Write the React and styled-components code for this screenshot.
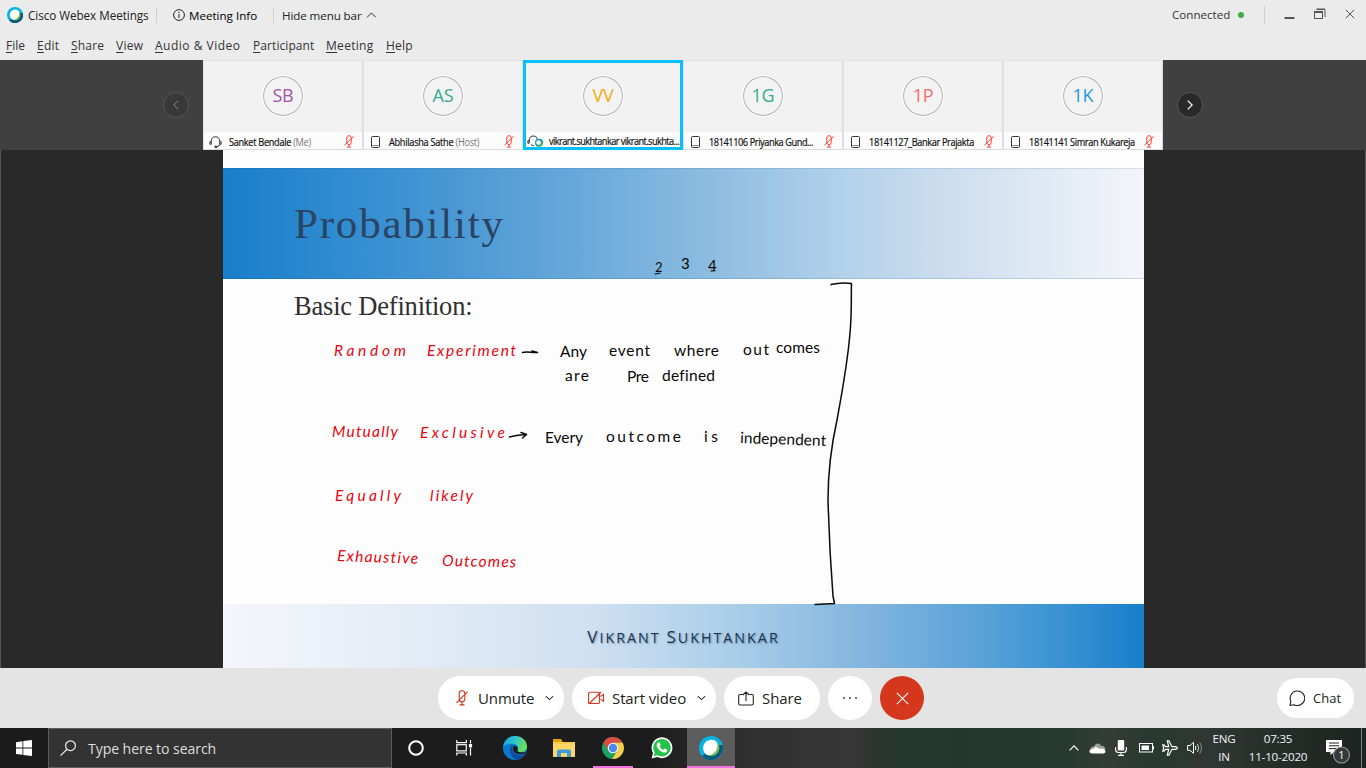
import React from "react";
import styled, { createGlobalStyle } from "styled-components";

const Global = createGlobalStyle`
  * { box-sizing: border-box; }
  html, body { margin: 0; padding: 0; }
  body { font-family: "Open Sans", "Noto Sans", sans-serif; overflow: hidden; background: #292929; }
  svg { display: block; flex: none; }
`;

const Screen = styled.div`
  width: 1366px;
  height: 768px;
  display: flex;
  flex-direction: column;
`;

const Text = styled.span`
  font-size: ${(p) => p.$size || 12}px;
  letter-spacing: ${(p) => p.$ls || 0}px;
  width: ${(p) => (p.$w ? p.$w + "px" : "auto")};
  margin-left: ${(p) => p.$ml || 0}px;
  margin-right: ${(p) => p.$mr || 0}px;
  padding-bottom: ${(p) => p.$lift || 0}px;
  color: ${(p) => p.$color || "#222"};
  white-space: nowrap;
  flex: none;
`;

/* ---------- title and menu bars ---------- */
const TitleBar = styled.header`
  height: 30px;
  background: #ebebeb;
  display: flex;
  align-items: center;
  padding: 0 11px 0 7px;
`;
const Divider = styled.i`
  width: 1px;
  height: ${(p) => p.$h || 16}px;
  background: #cfcfcf;
  margin: 0 ${(p) => p.$r}px 0 ${(p) => p.$l}px;
  flex: none;
`;
const Spacer = styled.div`
  flex: 1;
`;
const Dot = styled.i`
  width: 6px;
  height: 6px;
  border-radius: 50%;
  background: #3fab45;
  margin-left: 8px;
`;
const WindowButtons = styled.div`
  display: flex;
  align-items: center;
  gap: 19px;
  height: 26px;
  padding-bottom: 2px;
`;
const MenuBar = styled.nav`
  height: 30px;
  background: #ebebeb;
  display: flex;
  align-items: center;
  gap: 12px;
  padding-left: 6px;
`;
const Mnemonic = styled.u`
  text-decoration-thickness: 1px;
  text-underline-offset: 2px;
`;

/* ---------- participant strip ---------- */
const Strip = styled.section`
  height: 90px;
  background: #404040;
  display: flex;
  justify-content: center;
`;
const StripSide = styled.div`
  width: 203px;
  display: flex;
  align-items: center;
  justify-content: ${(p) => (p.$left ? "flex-end" : "flex-start")};
  padding: 0 14px;
`;
const RoundArrow = styled.button`
  width: 26px;
  height: 26px;
  padding: 0;
  border-radius: 50%;
  border: 1px solid #565656;
  background: ${(p) => (p.$dim ? "#383838" : "#292929")};
  color: ${(p) => (p.$dim ? "#858585" : "#fff")};
  display: flex;
  align-items: center;
  justify-content: center;
`;
const Tiles = styled.div`
  width: 960px;
  display: flex;
`;
const Tile = styled.div`
  width: 160px;
  height: 90px;
  display: flex;
  flex-direction: column;
  background: #f1f1f1;
  box-shadow: ${(p) =>
    p.$active
      ? "inset 0 0 0 3px #08c0fb"
      : "inset 1px 1px 0 #e3e3e3, inset -1px -1px 0 #dcdcdc"};
`;
const AvatarArea = styled.div`
  height: 72px;
  display: flex;
  justify-content: center;
  padding-top: 15px;
`;
const Avatar = styled.div`
  width: 42px;
  height: 42px;
  border-radius: 50%;
  background: #f3f3f3;
  border: 1.5px solid #fff;
  box-shadow: inset 0 0 0 1px #ababab;
  color: ${(p) => p.$color};
  font-size: 18px;
  letter-spacing: -0.2px;
  display: flex;
  align-items: center;
  justify-content: center;
  padding-bottom: 2px;
`;
const NameBar = styled.div`
  height: ${(p) => (p.$active ? 15 : 17)}px;
  margin: 0 ${(p) => (p.$active ? 3 : 1)}px;
  background: #fcfcfc;
  display: flex;
  align-items: center;
  padding: ${(p) => (p.$active ? "3px 0 0 1px" : "2px 8px 0 5px")};
`;
const IconSlot = styled.div`
  width: ${(p) => p.$w}px;
  padding-left: ${(p) => p.$pl || 0}px;
  margin-left: ${(p) => p.$ml || 0}px;
  flex: none;
`;
const Name = styled.div`
  flex: 1;
  min-width: 0;
  font-size: 10.2px;
  letter-spacing: ${(p) => p.$ls}px;
  color: #111;
  -webkit-text-stroke: 0.2px #111;
  white-space: nowrap;
  transform: scaleX(0.9);
  transform-origin: left center;
`;
const Role = styled.span`
  color: #777;
  -webkit-text-stroke: 0;
`;

/* ---------- shared slide ---------- */
const Stage = styled.main`
  height: 518px;
  background: #292929;
  border-left: 1px solid #555;
  border-right: 1px solid #555;
  padding: 0 221px 0 222px;
`;
const Slide = styled.div`
  width: 921px;
  height: 518px;
  background: #fdfdfd;
  position: relative;
  display: flex;
  flex-direction: column;
`;
const SlideHeader = styled.div`
  margin-top: 18px;
  height: 111px;
  background: linear-gradient(90deg, #187fcb 0%, #2f8bd0 12%, #4998d4 25%, #67a8da 38%, #8abbe0 52%, #b2d1ea 67%, #cfdfef 80%, #e5edf5 92%, #f4f5fa 100%);
  box-shadow: inset 0 1px 0 rgba(0, 70, 120, 0.12), inset 0 -1px 0 rgba(0, 70, 120, 0.16);
  padding: 29px 0 0 71px;
`;
const SlideTitle = styled.h1`
  margin: 0;
  font: 400 43px/54px "Liberation Serif", serif;
  letter-spacing: 1.8px;
  color: #2a4464;
`;
const SlideBody = styled.div`
  flex: 1;
  padding: 11px 0 0 71px;
`;
const SlideSubtitle = styled.h2`
  margin: 0;
  font: 400 26.5px/32px "Liberation Serif", serif;
  letter-spacing: -0.2px;
  color: #303030;
`;
const SlideFooter = styled.footer`
  height: 64px;
  background: linear-gradient(90deg, #f5f6fb 0%, #e4ecf6 20%, #cfe0f1 40%, #abcfe9 55%, #84b6df 69%, #5aa3d8 82%, #3a92d2 91%, #177fcb 100%);
  display: flex;
  align-items: center;
  justify-content: center;
  padding-top: 2px;
`;
const Author = styled.div`
  font-size: 17px;
  line-height: 24px;
  letter-spacing: 2px;
  color: #1d3550;
  text-shadow: 1px 1px 2px rgba(30, 60, 100, 0.45);
`;
const AuthorSmall = styled.span`
  font-size: 14.3px;
`;
const Ink = styled.svg`
  position: absolute;
  left: 0;
  top: 0;
`;
const InkWord = styled.text`
  font-family: Lato, "Open Sans", sans-serif;
  font-size: ${(p) => p.$size || 15.5}px;
  font-style: ${(p) => (p.$red ? "italic" : "normal")};
  font-variant-ligatures: none;
  fill: ${(p) => (p.$red ? "#e60610" : "#080808")};
`;

/* ---------- call controls ---------- */
const Controls = styled.section`
  height: 60px;
  background: #e4e4e4;
  display: flex;
  align-items: center;
  padding: 0 12px 0 438px;
  gap: 8px;
`;
const Pill = styled.button`
  width: ${(p) => p.$w}px;
  height: ${(p) => p.$h || 44}px;
  border: 0;
  border-radius: 22px;
  background: ${(p) => (p.$danger ? "#d5371c" : "#fff")};
  padding: 0 0 0 ${(p) => p.$pl || 0}px;
  display: flex;
  align-items: center;
  justify-content: ${(p) => (p.$pl ? "flex-start" : "center")};
  font-family: inherit;
  flex: none;
`;

/* ---------- taskbar ---------- */
const Taskbar = styled.footer`
  height: 40px;
  display: flex;
  background: linear-gradient(90deg, #1b1b1b 0, #1c1c1c 650px, #303030 750px, #363636 850px, #2a352f 885px, #243a2e 900px, #23372c 960px, #263a2f 1060px, #343c37 1110px, #28392f 1150px, #303633 1210px, #252d29 1280px, #1d2320 1366px);
`;
const TaskCell = styled.div`
  width: ${(p) => p.$w || 48}px;
  height: 40px;
  display: flex;
  align-items: center;
  justify-content: center;
  background: ${(p) => (p.$active ? "#5d5d5d" : "transparent")};
  border-bottom: ${(p) => (p.$active ? "2px solid #f173e2" : "0")};
  padding-top: ${(p) => (p.$active ? 2 : 0)}px;
  flex: none;
`;
const RunningCell = styled(TaskCell)`
  width: 40px;
  margin: 0 4px;
  border-bottom: 2px solid #f173e2;
  padding-top: 2px;
`;
const Search = styled.div`
  width: 344px;
  height: 40px;
  background: #333;
  border: 1px solid #5e5e5e;
  display: flex;
  align-items: center;
  padding-left: 11px;
  gap: 12px;
`;
const Tray = styled.div`
  display: flex;
  align-items: center;
  gap: 9px;
`;
const TrayText = styled.div`
  width: ${(p) => p.$w}px;
  margin-left: ${(p) => p.$ml || 0}px;
  font-size: 11.6px;
  line-height: 18px;
  letter-spacing: ${(p) => p.$ls || 0}px;
  color: #f3f3f3;
  text-align: center;
  white-space: nowrap;
  padding-bottom: 1px;
`;
const Notifications = styled.svg`
  margin: 7px 0 0 8px;
`;
const DesktopEdge = styled.i`
  width: 1px;
  height: 40px;
  background: #7b7f7d;
  margin-left: 9px;
`;

const Stroke = ({ w, h, box, color = "#333", sw = 1, children }) => (
  <svg width={w} height={h} viewBox={box || `0 0 ${w} ${h}`} fill="none" stroke={color} strokeWidth={sw}>
    {children}
  </svg>
);

const WebexLogo = ({ size }) => (
  <svg width={size} height={size} viewBox="0 0 24 24">
    <circle cx="12" cy="12" r="12" fill="#04b4e5" />
    <path d="M23.6 9A12 12 0 0 1 3.2 20.2L7 16.8A7.5 7.5 0 0 0 19 9Z" fill="#075a7c" />
    <circle cx="12.4" cy="12" r="8" fill="#6cbf4b" />
    <path d="M4.2 12.5C4 7.2 8 3.6 12.8 3.8C17 3.9 18.8 6.8 18.4 10.5C17.8 15.7 13.4 19.6 9.4 19.2C6.2 18.8 4.4 15.8 4.2 12.5Z" fill="#fff" />
  </svg>
);

const MicOff = ({ w = 12, h = 16, color = "#d5371c", sw = 1.1 }) => (
  <Stroke w={w} h={h} box="0 0 12 16" color={color} sw={sw}>
    <rect x="3.2" y="0.8" width="5.6" height="11" rx="2.8" />
    <path d="M0.5 12.8L11.6 1.6M6 12v2.5M3.5 14.9h5" />
  </Stroke>
);
const Headset = () => (
  <Stroke w={13} h={12} color="#444" sw={1.1}>
    <path d="M2.3 8V5a4.2 4.2 0 0 1 8.4 0v3M2.2 5.2c-2 .6-2 3 0 3.400M10.8 5.2c2 .6 2 3 0 3.400M10.500 8.500c-.2 1.600-1.400 2.200-3 2.200" />
    <circle cx="6.8" cy="10.8" r=".8" fill="#444" />
  </Stroke>
);
const Phone = () => (
  <Stroke w={9} h={12} color="#333" sw={1}>
    <rect x=".5" y=".5" width="8" height="11" rx="1" />
    <path d="M1 9.500h7" stroke="#888" />
  </Stroke>
);
const HeadsetHost = () => (
  <svg width="17" height="12" viewBox="0 0 17 12">
    <path d="M2.3 8V5a4 4 0 0 1 8 0v1M2.2 5.2c-2 .6-2 3 0 3.4M4 9.5c.6 1 1.6 1.2 3 1.2" fill="none" stroke="#444" strokeWidth="1.1" />
    <circle cx="12" cy="7.8" r="4" fill="#0799b8" />
    <circle cx="13" cy="9" r="2.4" fill="#5ab04f" />
    <circle cx="11.5" cy="7.5" r="2.3" fill="#fff" />
  </svg>
);
const Chevron = ({ up, w = 10, color = "#333", sw = 1.2 }) => (
  <Stroke w={w} h={6} box="0 0 10 6" color={color} sw={sw}>
    <path d={up ? "M.6 5.3L5 .9l4.4 4.4" : "M1 1l4 3.8L9 1"} />
  </Stroke>
);

const EdgeLogo = () => (
  <svg width="24" height="24" viewBox="0 0 24 24">
    <defs>
      <linearGradient id="edgeTop" x1="0" x2="1" y1="0" y2=".3">
        <stop offset="0" stopColor="#1b9de2" />
        <stop offset=".5" stopColor="#2bc3d2" />
        <stop offset="1" stopColor="#6adf58" />
      </linearGradient>
    </defs>
    <circle cx="12" cy="12" r="12" fill="#0b79d0" />
    <path d="M.1 11C1 4.200 6 0 12 0c7 0 12 5 12 10.500 0 4-3 5.700-6 5.700-2.500 0-4.200-.8-3.500-1.900 1.600-2.700.2-6.300-4-6.600C5.700 7.400 1.500 8.500.1 11Z" fill="url(#edgeTop)" />
    <path d="M8.500 9.500C5.500 13 6.200 20 13.500 23.800c4-.4 7.500-3.300 9-6.600-3.500 2.200-10.500 2.400-12.700-1.700-1-2-.7-4.300.9-5.600-.7-.5-1.500-.6-2.200-.4Z" fill="#114d99" />
    <path d="M11 10.300c-1.700 1.700-1.500 5.700 2.200 7.200 2.700 1 6.500.7 9-.3.500-.7.300-1.500-.5-1.200-2.500.8-8 .6-7.200-1.700 1-2-.8-5-3.500-4Z" fill="#1c1c1c" />
  </svg>
);
const FolderIcon = () => (
  <svg width="22" height="19" viewBox="0 0 22 19">
    <path d="M0 1h8l1.500 2H22v15H0Z" fill="#f9cb4e" />
    <path d="M0 0h8.500v3H0Z" fill="#e2a200" />
    <path d="M0 5h22v12H0Z" fill="#fed766" />
    <path d="M4 18v-6.500L6 10.500h10l2 1V18h-4v-4H8v4Z" fill="#3f9ade" />
  </svg>
);
const ChromeLogo = () => (
  <svg width="22" height="22" viewBox="0 0 22 22">
    <circle cx="11" cy="11" r="11" fill="#1fa260" />
    <path d="M11 11L1.500 5.400A11 11 0 0 1 20.600 5.800H11Z" fill="#db4b3f" />
    <path d="M20.500 5.800A11 11 0 0 1 10.300 22l5.200-8.500L11 5.800Z" fill="#ffcd45" />
    <path d="M1.500 5.400L6.600 13.700l4.400-2.700V5.800Z" fill="#db4b3f" />
    <circle cx="11" cy="11" r="5.300" fill="#f4f4f4" />
    <circle cx="11" cy="11" r="4.200" fill="#4a88ee" />
  </svg>
);
const WhatsAppLogo = () => (
  <svg width="22" height="22" viewBox="0 0 22 22">
    <path d="M0.600 21.500L2 16A10.400 10.400 0 1 1 6.200 20Z" fill="#fff" />
    <path d="M2.800 19.200l1-3.600A8.700 8.700 0 1 1 6.600 18.200Z" fill="#25c24a" />
    <path d="M7.200 5.500c.7-.3 1.300-.2 1.600.5l.7 1.700c.2.600-.8 1.300-.8 1.700.7 1.500 2 2.600 3.600 3.300.6.1 1.200-1.300 1.700-1.200l2 1c.6.400 0 1.900-.6 2.400-1.700 1.300-4.200.4-6-.9-1.500-1.100-2.900-2.700-3.500-4.400-.4-1.500 0-3.300 1.300-4.100Z" fill="#fff" />
  </svg>
);

const people = [
  { initials: "SB", color: "#a054a8", name: "Sanket Bendale", role: "(Me)", device: "headset", ls: -0.33 },
  { initials: "AS", color: "#33ac8e", name: "Abhilasha Sathe", role: "(Host)", device: "phone", ls: -0.3 },
  { initials: "VV", color: "#f8a912", name: "vikrant.sukhtankar vikrant.sukhta...", device: "host", active: true, ls: -0.62 },
  { initials: "1G", color: "#33ac8e", name: "18141106 Priyanka Gund...", device: "phone", ls: -0.45 },
  { initials: "1P", color: "#fb6a63", name: "18141127_Bankar Prajakta", device: "phone", ls: -0.4 },
  { initials: "1K", color: "#1c9dd8", name: "18141141 Simran Kukareja", device: "phone", ls: -0.4 },
];

const menus = [
  ["F", "ile", 19], ["E", "dit", 22, 0.2], ["S", "hare", 33, 0.2], ["V", "iew", 27, 0.25],
  ["A", "udio & Video", 86, 0.5], ["P", "articipant", 61, 0.08], ["M", "eeting", 48, 0.3], ["H", "elp", 27, 0.2],
];

/* word, x, baseline, width, red, rotation */
const notes = [
  ["Random", 334, 356, 72, true], ["Experiment", 427, 356, 89, true],
  ["Any", 560, 357, 27], ["event", 609, 356, 41], ["where", 674, 356, 45],
  ["out", 743, 355, 26], ["comes", 776, 353, 44],
  ["are", 565, 381, 24], ["Pre", 627, 382, 22], ["defined", 662, 381, 53],
  ["Mutually", 332, 437, 66, true], ["Exclusive", 420, 438, 85, true],
  ["Every", 545, 443, 38], ["outcome", 606, 442, 75], ["is", 704, 442, 14], ["independent", 740, 443, 86, false, 2],
  ["Equally", 335, 501, 66, true], ["likely", 430, 501, 43, true],
  ["Exhaustive", 337, 561, 81, true, 2], ["Outcomes", 442, 566, 74, true, 1],
];

const devices = { headset: Headset, phone: Phone, host: HeadsetHost };

function Participant({ initials, color, name, role, device, active, ls }) {
  const Device = devices[device];
  return (
    <Tile $active={active}>
      <AvatarArea><Avatar $color={color}>{initials}</Avatar></AvatarArea>
      <NameBar $active={active}>
        <IconSlot $w={active ? 22 : 20} $pl={device === "phone" ? 2 : 0}><Device /></IconSlot>
        <Name $ls={ls}>{name} {role && <Role>{role}</Role>}</Name>
        {!active && <MicOff w={10} h={13} color="#f5372b" sw={1.15} />}
      </NameBar>
    </Tile>
  );
}

export default function App() {
  return (
    <Screen>
      <Global />
      <TitleBar>
        <WebexLogo size={16} />
        <Text $w={120} $size={11.7} $ls={-0.05} $ml={5}>Cisco Webex Meetings</Text>
        <Divider $l={8} $r={16} />
        <Stroke w={12} h={12} color="#222">
          <circle cx="6" cy="6" r="5.400" /><path d="M6 5v4M6 2.800v1.200" />
        </Stroke>
        <Text $w={68} $size={11.6} $color="#000" $ml={4}>Meeting Info</Text>
        <Divider $l={16} $r={8} />
        <Text $w={79} $size={11.6} $ls={-0.1}>Hide menu bar</Text>
        <IconSlot $w={15} $pl={5}><Chevron up w={11} sw={1} /></IconSlot>
        <Spacer />
        <Text $w={58} $size={11.6} $lift={2} $color="#333">Connected</Text>
        <Dot />
        <Divider $l={20} $r={19} $h={18} />
        <WindowButtons>
          <Stroke w={11} h={12} color="#555" sw={2}><path d="M.5 10h10" /></Stroke>
          <Stroke w={12} h={12} color="#555"><rect x=".5" y="3.500" width="8" height="7" /><path d="M.5 4.500h8M2.500 1.500h8.500v7.500M2.500 1h8.500" /></Stroke>
          <Stroke w={10} h={10} color="#555"><path d="M.8.8l8.400 8.400M9.200.8L.8 9.200" /></Stroke>
        </WindowButtons>
      </TitleBar>
      <MenuBar>
        {menus.map(([key, rest, w, ls]) => (
          <Text key={rest} $w={w} $size={12} $ls={ls} $color="#333"><Mnemonic>{key}</Mnemonic>{rest}</Text>
        ))}
      </MenuBar>

      <Strip>
        <StripSide $left>
          <RoundArrow $dim><Stroke w={6} h={10} color="currentColor"><path d="M5.300.6L.8 5l4.500 4.400" /></Stroke></RoundArrow>
        </StripSide>
        <Tiles>{people.map((p) => <Participant key={p.initials} {...p} />)}</Tiles>
        <StripSide>
          <RoundArrow><Stroke w={6} h={10} color="currentColor" sw={1.2}><path d="M.7.6L5.200 5 .7 9.400" /></Stroke></RoundArrow>
        </StripSide>
      </Strip>

      <Stage>
        <Slide>
          <SlideHeader><SlideTitle>Probability</SlideTitle></SlideHeader>
          <SlideBody><SlideSubtitle>Basic Definition:</SlideSubtitle></SlideBody>
          <SlideFooter>
            <Author>V<AuthorSmall>IKRANT </AuthorSmall>S<AuthorSmall>UKHTANKAR</AuthorSmall></Author>
          </SlideFooter>
          <Ink width="921" height="518" viewBox="223 150 921 518">
            {notes.map(([word, x, y, w, red, turn]) => (
              <InkWord key={word} $red={red} x={x} y={y} textLength={w} transform={turn ? `rotate(${turn} ${x} ${y})` : undefined}>
                {word}
              </InkWord>
            ))}
            <InkWord $size={13} x="655" y="272">2</InkWord>
            <InkWord $size={15} x="681" y="269">3</InkWord>
            <InkWord $size={15} x="708" y="271">4</InkWord>
            <g fill="none" stroke="#0a0a0a" strokeWidth="1.500" strokeLinecap="round" strokeLinejoin="round">
              <path d="M655 274l5-.8M711 271l4-.4" strokeWidth="1.100" />
              <path d="M522.500 352.500C527 351 532 353 537.500 352.500M532 351l5.500 1.500" />
              <path d="M509.500 437C515 435.500 520 435 526 434.500M521 432.500l5.500 2-4 3.500" />
              <path d="M831 284.500C837 283 845 282.500 851.500 283.500C851 296 852 312 850 333C848 358 842 393 837 420C831 447 828 473 828 500C829 535 831 570 833 596L834.500 603.500L815 604.500" />
            </g>
          </Ink>
        </Slide>
      </Stage>

      <Controls>
        <Pill $w={126} $pl={18}>
          <MicOff />
          <Text $w={56} $size={15} $ls={-0.1} $ml={10} $mr={11}>Unmute</Text>
          <Chevron w={9} />
        </Pill>
        <Pill $w={144} $pl={16}>
          <Stroke w={17} h={14} color="#d5371c" sw={1.1}>
            <rect x=".6" y="1.200" width="10.800" height="11.300" rx="1" /><path d="M.8 13L13 1M12.500 5.500l3-2.200v7l-3-2.200" />
          </Stroke>
          <Text $w={74} $size={15} $ls={-0.1} $ml={7} $mr={11}>Start video</Text>
          <Chevron w={9} />
        </Pill>
        <Pill $w={96} $pl={14}>
          <Stroke w={16} h={15} color="#222" sw={1.1}>
            <path d="M4.500 3.500H2Q.7 3.500.7 5v7.500q0 1.500 1.300 1.500h12q1.300 0 1.300-1.500V5q0-1.500-1.300-1.500h-2.500M8 10V1M4.800 4L8 .9 11.200 4" />
          </Stroke>
          <Text $w={40} $size={15} $ls={-0.1} $ml={8}>Share</Text>
        </Pill>
        <Pill $w={44}>
          <svg width="16" height="2" viewBox="0 0 16 2" fill="#444"><circle cx="2" cy="1" r="1" /><circle cx="8" cy="1" r="1" /><circle cx="14" cy="1" r="1" /></svg>
        </Pill>
        <Pill $w={44} $danger>
          <Stroke w={13} h={13} color="#fff" sw={1.1}><path d="M.8.8l11.400 11.400M12.200.8L.8 12.200" /></Stroke>
        </Pill>
        <Spacer />
        <Pill $w={77} $h={40} $pl={12}>
          <Stroke w={16} h={16} color="#222" sw={1.1}><path d="M1 15.300l.8-4A7.300 7.300 0 1 1 5 14.700Z" /></Stroke>
          <Text $size={13} $ml={8}>Chat</Text>
        </Pill>
      </Controls>

      <Taskbar>
        <TaskCell>
          <svg width="16" height="16" viewBox="0 0 16 16" fill="#fff"><path d="M0 2.200L6.500 1.200V7.500H0ZM7.300 1.100L16 0V7.500H7.300ZM0 8.400H6.500V14.800L0 13.900ZM7.300 8.400H16V16L7.300 14.900Z" /></svg>
        </TaskCell>
        <Search>
          <Stroke w={16} h={16} color="#eee" sw={1.2}><circle cx="10.500" cy="5.700" r="4.900" /><path d="M7 9.200L.5 15.600" /></Stroke>
          <Text $size={14.1} $ls={-0.08} $color="#dedede">Type here to search</Text>
        </Search>
        <TaskCell><Stroke w={18} h={18} color="#fff" sw={2}><circle cx="9" cy="9" r="6.800" /></Stroke></TaskCell>
        <TaskCell>
          <Stroke w={17} h={16} color="#fff" sw={1.2}>
            <path d="M.8 0v2.600h9.500V0M.8 15.600v-2.600h9.500v2.600M14.500 0v3.500M14.500 8v7.600" />
            <rect x=".8" y="4.700" width="9.500" height="6.200" /><rect x="13.500" y="4.600" width="2" height="2.300" fill="#fff" />
          </Stroke>
        </TaskCell>
        <TaskCell $w={54}><EdgeLogo /></TaskCell>
        <TaskCell $w={43}><FolderIcon /></TaskCell>
        <TaskCell $w={4} />
        <RunningCell><ChromeLogo /></RunningCell>
        <TaskCell $w={50}><WhatsAppLogo /></TaskCell>
        <TaskCell $active><WebexLogo size={24} /></TaskCell>
        <Spacer />
        <Tray>
          <Chevron up w={12} color="#fff" />
          <svg width="17" height="12" viewBox="0 0 17 12"><path d="M2 9C0 6 3 4 5 4.500C6 1 11 0 12 4C15 3 18 7 15 9Z" fill="#9a9f9c" /><path d="M3 11.500C-1 11 0 6.500 4 7C6 3.500 9 5 10.500 7C14 5.500 16.500 8 16.500 9.500C16.500 11 15 11.500 14 11.500Z" fill="#fff" /></svg>
          <svg width="12" height="16" viewBox="0 0 12 16" fill="#fff"><rect x="2.800" width="6.400" height="10.500" rx="1" /><path d="M.6 7v2.500q0 3 3 3h4.800q3 0 3-3V7M6 12.500v3M3 15.400h6" fill="none" stroke="#fff" strokeWidth="1.100" /></svg>
          <IconSlot $w={20} $pl={3}>
            <Stroke w={16} h={10} color="#fff"><rect x=".5" y=".5" width="13" height="8.500" /><rect x="2.500" y="2.500" width="7.500" height="4.500" fill="#fff" stroke="none" /><path d="M14.500 3v3.500" /></Stroke>
          </IconSlot>
          <IconSlot $w={16} $ml={-3}>
            <Stroke w={16} h={16} color="#fff" sw={1.2}><path d="M15.300 8q0-1.300-2-1.300H10L6.800.8H5.300L6.700 6.700H3.500L2 4.800H.8L1.600 8l-.8 3.200H2L3.500 9.300h3.200L5.300 15.200h1.500L10 9.300h3.300q2 0 2-1.300Z" /></Stroke>
          </IconSlot>
          <Stroke w={17} h={14} color="#fff"><path d="M.6 4.500H3L6.500 1.300v11L3 9.300H.6ZM8.300 4.800q1.200 2.100 0 4.200" /><path d="M10.500 3q2.200 4 0 8" stroke="#ccc" /><path d="M12.800 1.500q3.300 5.400 0 11" stroke="#8a8f8c" /></Stroke>
          <TrayText $w={24} $ml={-1} $ls={-0.2}>ENG<br />IN</TrayText>
          <TrayText $w={62} $ml={2} $ls={-0.2}>07:35<br />11-10-2020</TrayText>
          <Notifications width="26" height="26" viewBox="0 0 26 26">
            <path d="M0 1h16v12H8l-3.500 3V13H0Z" fill="#fff" />
            <path d="M3 4h10M3 6.800h10M3 9.600h7" stroke="#222" />
            <circle cx="15.500" cy="16" r="8" fill="#343a37" stroke="#999" strokeWidth="1.100" />
            <text x="15.500" y="20" fontSize="11" fill="#fff" textAnchor="middle" fontFamily="Open Sans, sans-serif">1</text>
          </Notifications>
        </Tray>
        <DesktopEdge />
        <IconSlot $w={4} />
      </Taskbar>
    </Screen>
  );
}
